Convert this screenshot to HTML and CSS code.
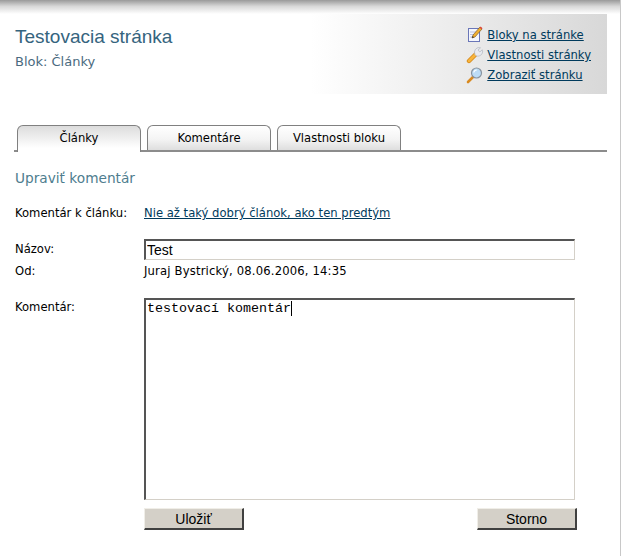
FILE: index.html
```html
<!DOCTYPE html>
<html>
<head>
    <title>Upraviť komentár</title>
    <link rel="stylesheet" href="styles.css">
</head>
<body>
    <div class="top-shade"></div>
    <div class="page">
        <div class="header">
            <div class="header-text">
                <h1>Testovacia stránka</h1>
                <div class="subtitle">Blok: Články</div>
            </div>
            <ul class="header-links">
                <li>
                    <svg class="icon" width="18" height="18" viewBox="0 0 18 18">
                        <rect x="2.500" y="2.500" width="11" height="13" fill="#f4f6fc" stroke="#6a76b8"/>
                        <path d="M4 6h6M4 8.500h5M4 11h4" stroke="#b9c1e2" fill="none"/>
                        <path d="M6 12l1-3 7-8 2 2-7 8z" fill="#f0b030" stroke="#6b4a20" stroke-width="0.6"/>
                        <path d="M13.500 1.500l2 2 1-1.200-1.800-1.800z" fill="#d9483a"/>
                        <path d="M6 12l0.700-2 1.300 1.200z" fill="#333"/>
                    </svg>
                    <a href="#">Bloky na stránke</a>
                </li>
                <li>
                    <svg class="icon" width="18" height="18" viewBox="0 0 18 18">
                        <path d="M3 15l7-7" stroke="#d58a1c" stroke-width="4.400" stroke-linecap="round"/>
                        <path d="M3 15l7-7" stroke="#f8b43c" stroke-width="2.800" stroke-linecap="round"/>
                        <path d="M9 8.500a4.800 4.800 0 0 1 4.500-7l1 0.300-2.500 2.200 1.800 2 2.500-2.200 0.300 1a4.800 4.800 0 0 1-6.500 5z" fill="#e8eaf0" stroke="#b0b4be" stroke-width="0.7"/>
                    </svg>
                    <a href="#">Vlastnosti stránky</a>
                </li>
                <li>
                    <svg class="icon" width="18" height="18" viewBox="0 0 18 18">
                        <path d="M2 16l5-5" stroke="#d98a20" stroke-width="2.600" stroke-linecap="round"/>
                        <circle cx="10.500" cy="7" r="5" fill="#bcdcf6" stroke="#8a94a0" stroke-width="1.200"/>
                        <path d="M7.800 6.500a3 3 0 0 1 3-2.500" stroke="#fff" stroke-width="1.200" fill="none"/>
                    </svg>
                    <a href="#">Zobraziť stránku</a>
                </li>
            </ul>
        </div>

        <div class="tabs">
            <a class="tab active" href="#">Články</a>
            <a class="tab" href="#">Komentáre</a>
            <a class="tab" href="#">Vlastnosti bloku</a>
        </div>

        <h2>Upraviť komentár</h2>

        <div class="row row-article">
            <div class="label">Komentár k článku:</div>
            <a href="#">Nie až taký dobrý článok, ako ten predtým</a>
        </div>

        <div class="row row-name">
            <label class="label" for="name">Názov:</label>
            <input type="text" id="name" value="Test">
        </div>

        <div class="row row-from">
            <div class="label">Od:</div>
            <div class="from-value">Juraj Bystrický, 08.06.2006, 14:35</div>
        </div>

        <div class="row row-comment">
            <label class="label" for="comment">Komentár:</label>
            <div class="comment-box">
                <textarea id="comment">testovací komentár</textarea>
                <span class="caret"></span>
            </div>
        </div>

        <div class="buttons">
            <button type="button">Uložiť</button>
            <button type="button">Storno</button>
        </div>
    </div>
</body>
</html>
```

FILE: styles.css
```css
html, body {
    height: 100%;
}

body {
    font-family: "DejaVu Sans", sans-serif;
    font-size: 11.6px;
    color: #000;
    background-color: #fff;
    margin: 0;
    border-right: 1px solid #c8c8c8;
    box-sizing: border-box;
    overflow: hidden;
}

a {
    color: #003a5c;
}

.top-shade {
    height: 14px;
    background: linear-gradient(to bottom, #9a9a9a, #d8d8d8 45%, #fff);
}

.page {
    width: 593px;
    margin-left: 14px;
}

.header {
    display: flex;
    justify-content: space-between;
    height: 80px;
    background: linear-gradient(to right, #fff 50%, #d8d8d8);
}

h1 {
    font-family: "Liberation Sans", Arial, sans-serif;
    font-size: 19px;
    font-weight: normal;
    color: #35647e;
    margin: 12px 0 0 1px;
}

.subtitle {
    font-size: 13px;
    color: #4a6a80;
    margin: 6px 0 0 1px;
}

.header-links {
    list-style: none;
    margin: 11px 16px 0 0;
    padding: 0;
}

.header-links li {
    display: flex;
    align-items: center;
    gap: 3px;
    height: 20px;
    white-space: nowrap;
}

.icon {
    flex: none;
}

.tabs {
    display: flex;
    gap: 6px;
    height: 25px;
    margin-top: 31px;
    padding-left: 3px;
    border-bottom: 2px solid #8c8c8c;
}

.tab {
    width: 122px;
    height: 24px;
    line-height: 25px;
    text-align: center;
    color: #000;
    text-decoration: none;
    border: 1px solid #808080;
    border-bottom: none;
    border-radius: 6px 6px 0 0;
    background: linear-gradient(to bottom, #fff, #f4f4f4 55%, #dedede);
}

.tab.active {
    height: 26px;
    background: linear-gradient(to bottom, #dcdcdc, #fff 85%);
}

h2 {
    font-size: 13.7px;
    font-weight: normal;
    color: #4e7d8e;
    margin: 18px 0 0 1px;
}

.row {
    display: flex;
    padding-left: 1px;
}

.label {
    width: 129px;
    flex: none;
}

.row-article {
    margin-top: 20px;
}

.row-name {
    margin-top: 19px;
    line-height: 21px;
}

.row-from {
    margin-top: 4px;
}

.from-value {
    letter-spacing: 0.17px;
}

.row-comment {
    margin-top: 20px;
    line-height: 16px;
}

.row-comment .label {
    padding-top: 1px;
}

input[type="text"],
textarea {
    box-sizing: border-box;
    width: 431px;
    margin: 0;
    padding: 1px;
    border-width: 2px 1px 1px 2px;
    border-style: solid;
    border-color: #555 #d4d0c8 #d4d0c8 #555;
    background-color: #fff;
    color: #000;
    outline: none;
    border-radius: 0;
}

input[type="text"] {
    height: 21px;
    font-family: "Liberation Sans", Arial, sans-serif;
    font-size: 14px;
}

.comment-box {
    position: relative;
    height: 202px;
}

textarea {
    display: block;
    height: 202px;
    resize: none;
    font-family: "Liberation Mono", "Courier New", monospace;
    font-size: 13.33px;
}

.caret {
    position: absolute;
    left: 147px;
    top: 3px;
    width: 1px;
    height: 15px;
    background-color: #000;
}

.buttons {
    display: flex;
    justify-content: space-between;
    width: 433px;
    margin: 8px 0 0 130px;
}

button {
    width: 100px;
    height: 22px;
    padding: 0;
    font-family: "Liberation Sans", Arial, sans-serif;
    font-size: 14px;
    color: #000;
    background-color: #d4d0c8;
    border-width: 1px 2px 2px 1px;
    border-style: solid;
    border-color: #f0eee8 #404040 #404040 #f0eee8;
}
```
